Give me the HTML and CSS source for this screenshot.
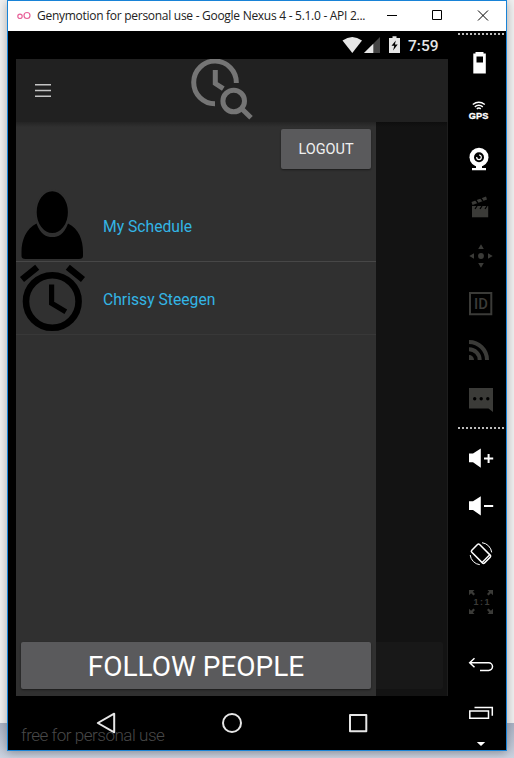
FILE: index.html
```html
<!DOCTYPE html>
<html lang="en">
<head>
<meta charset="utf-8">
<title>Genymotion for personal use</title>
<link rel="stylesheet" href="styles.css">
</head>
<body>
<div class="desktop">
<main class="window">
  <header class="titlebar">
    <svg class="app-logo" width="14" height="10" viewBox="17 10 14 10"><g fill="none" stroke="#e8639a" stroke-width="1.2"><circle cx="20" cy="15.3" r="2.2"/><circle cx="27" cy="14.5" r="3"/></g></svg>
    <span class="title">Genymotion for personal use - Google Nexus 4 - 5.1.0 - API 2...</span>
    <svg class="controls" width="118" height="30" viewBox="378 1 118 30"><g fill="none" stroke="#000" stroke-width="1"><path d="M387 15.5h10M432.500 10.500h9v9h-9zM478 10.500l10 10M488 10.500l-10 10"/></g></svg>
  </header>
  <div class="body">
    <section class="device">
      <div class="status">
        <svg width="60" height="20" viewBox="342 35 60 20">
          <path fill="#e6e6e6" d="M342.500 40.500Q352.300 33.500 362 40.500L352.300 53z"/>
          <path fill="#444" d="M380 37v16h-16z"/><path fill="#e6e6e6" d="M373.300 43.700V53H364z"/>
          <path fill="#e6e6e6" d="M389 38h3.500v-1.700h4V38h3.500v15h-11z"/><path fill="#000" d="M395.800 40.500l-4.300 5.200h2.800l-1.200 4.800 4.600-6h-2.800z"/>
        </svg>
        <span class="time">7:59</span>
      </div>
      <div class="appbar">
        <svg class="menu" width="16" height="14" viewBox="35 83 16 14"><path stroke="#c4c4c4" stroke-width="1.500" d="M35 84.700h16M35 90.500h16M35 96.200h16"/></svg>
        <svg class="logo" width="64" height="63" viewBox="190 59 64 63"><g fill="none" stroke="#757575" stroke-width="5"><path d="M236.300 83A21.300 21.300 0 1 0 215 103.700"/><path d="M215.300 70v13.500l8 5.200"/><circle cx="233.700" cy="101" r="10.800"/><path d="M241.500 108.500l9.500 9.300"/></g></svg>
      </div>
      <div class="content">
        <div class="drawer">
          <button class="logout">LOGOUT</button>
          <ul class="people">
            <li><svg width="68" height="72" viewBox="18 189 68 72"><path d="M36.500 223.500C41 235 46 237 52.300 237S63.500 235 68 223.500C79 229 83 240 83 252v4q0 3-4 3H25.500q-4 0-4-3v-4C21.500 240 26 229 36.500 223.500z"/><ellipse cx="52.300" cy="212.200" rx="16.500" ry="21.800" stroke="#303030" stroke-width="1.800"/></svg><span>My Schedule</span></li>
            <li><svg width="68" height="72" viewBox="18 262 68 72"><g fill="none" stroke="#000"><circle cx="52.300" cy="301.500" r="26.300" stroke-width="6.600"/><path stroke-width="6.500" d="M22 279.500l15.200-12.200M67.800 267.300L83 279.500"/><path stroke-width="5.200" d="M51.600 284.500v18.700l14.200 8.600"/></g></svg><span>Chrissy Steegen</span></li>
          </ul>
          <button class="follow">FOLLOW PEOPLE</button>
        </div>
        <div class="scrim"><div class="ghost"></div></div>
      </div>
      <nav class="navbar">
        <svg width="432" height="54" viewBox="16 696 432 54"><g fill="none" stroke="#e6e6e6" stroke-width="2" stroke-linejoin="round"><path d="M97.800 723l16.400-9.300v18.600z"/><circle cx="232" cy="723" r="9"/><path d="M350 714.900h16.300v16.300H350z"/></g></svg>
        <span class="watermark">free for personal use</span>
      </nav>
    </section>
    <aside class="tools">
      <div class="dots"></div>
      <div class="group">
        <svg viewBox="458 38 48 48"><path fill="#fff" fill-rule="evenodd" d="M475.500 52h8v1.500h2.300v20h-12.500v-20h2.200zM476.500 56.500v6h6.500v-6z"/></svg>
        <svg viewBox="458 86 48 48"><g fill="none" stroke="#fff" stroke-width="1.500"><path d="M472.800 104.500q6-4.500 12 0M474.800 106.800q4-3 8 0M476.800 108.800q2-1.500 4 0"/></g><text x="468.800" y="118.500" textLength="19.500" lengthAdjust="spacingAndGlyphs" class="gps">GPS</text></svg>
        <svg viewBox="458 134 48 48"><circle cx="479" cy="157.300" r="9.500" fill="#fff"/><path fill="#fff" d="M476 165h6v3h4v2.200h-14V168h4z"/><circle cx="479" cy="157.300" r="5"/><circle cx="479" cy="157.300" r="2.300" fill="none" stroke="#fff" stroke-width="1.200"/><path d="M476 154h3v3h-3z"/></svg>
        <svg viewBox="458 182 48 48"><g fill="#3b3b38"><path d="M472 206h16.200v11.300H472z"/><path d="M471.500 202l14.500-5.500 1 3-14.500 5.500z"/></g><path stroke="#000" stroke-width="1.300" d="M475 199l3 4M480 197l3 4M475 209l2-3M480 209l2-3M485 209l2-3"/></svg>
        <svg viewBox="458 230 48 48"><g fill="#3b3b38"><circle cx="481" cy="256" r="2.900"/><path d="M481 244.300l2.800 4.700h-5.600zM481 267.700l2.800-4.700h-5.600zM469.300 256l4.700-2.800v5.600zM492.700 256l-4.700-2.800v5.600z"/></g></svg>
        <svg viewBox="458 278 48 48"><path fill="none" stroke="#3b3b38" stroke-width="2" d="M470 293h21.300v21.300H470z"/><text x="474" y="309" textLength="13.800" lengthAdjust="spacingAndGlyphs" class="id">ID</text></svg>
        <svg viewBox="458 326 48 48"><g fill="none" stroke="#3b3b38" stroke-width="4"><path d="M469 342a18 18 0 0 1 18 18M469 349.300a10.700 10.700 0 0 1 10.700 10.700"/></g><path fill="#3b3b38" d="M469 355a5 5 0 0 1 5 5h-5z"/></svg>
        <svg viewBox="458 374 48 48"><path fill="#3b3b38" d="M469 388h24v24l-4.500-3.500H469z"/><g fill="#000"><circle cx="474.700" cy="398.700" r="1.700"/><circle cx="481.200" cy="398.700" r="1.700"/><circle cx="487.800" cy="398.700" r="1.700"/></g></svg>
      </div>
      <div class="dots"></div>
      <div class="group">
        <svg viewBox="458 434 48 48"><path fill="#fff" d="M469 453.500h4l7.800-5v19.200l-7.800-5.500h-4z"/><path stroke="#fff" stroke-width="2" d="M484 458.500h9.200M488.600 454v9"/></svg>
        <svg viewBox="458 482 48 48"><path fill="#fff" d="M469 501.200h4l7.800-5v19.200l-7.800-5.500h-4z"/><path stroke="#fff" stroke-width="2" d="M484 506h9.200"/></svg>
        <svg viewBox="458 530 48 48"><g fill="none" stroke="#fff"><rect x="472" y="548.200" width="18" height="11" rx="1.500" stroke-width="1.500" transform="rotate(45 481 553.700)"/><path stroke-width="1.400" d="M482.300 562.200l7.200-7.200"/><path stroke-width="1" d="M482 542.700a11 11 0 0 1 9.700 9.700M470.200 555a11 11 0 0 0 9.600 9.700"/></g></svg>
        <svg viewBox="458 578 48 48"><g fill="#3b3b38"><path d="M469 590h5.500l-1.700 1.700 2.200 2.200-1.500 1.500-2.400-2.200-2.100 2.100zM493 590h-5.500l1.700 1.700-2.200 2.200 1.500 1.500 2.400-2.200 2.100 2.100zM469 614h5.500l-1.700-1.700 2.200-2.200-1.500-1.500-2.400 2.200-2.100-2.100zM493 614h-5.500l1.700-1.700-2.200-2.200 1.500-1.500 2.400 2.200 2.100-2.100z"/></g><text x="473.500" y="605.300" textLength="16" class="ratio">1:1</text></svg>
      </div>
      <div class="group keys">
        <svg viewBox="458 640 48 48"><path fill="none" stroke="#fff" stroke-width="1.500" d="M474.500 658.300l-4.800 4.500 4.800 4.500M469.700 662.800h19a3.800 3.800 0 0 1 0 7.600H480"/></svg>
        <svg viewBox="458 688 48 48"><path fill="none" stroke="#fff" stroke-width="1.500" d="M469.800 711h18.700v7.200h-18.700zM474.500 707.500h17.800v8.200"/></svg>
        <svg class="caret" viewBox="458 736 48 14"><path fill="#fff" d="M476.800 742h8.400l-4.200 4z"/></svg>
      </div>
    </aside>
  </div>
</main>
</div>
</body>
</html>
```
FILE: styles.css
```css
* { box-sizing: border-box; }
body { margin: 0; font-family: Roboto, sans-serif; }
svg { display: block; flex: none; }
.desktop {
  width: 514px; height: 758px; padding-left: 7px; overflow: hidden;
  background: linear-gradient(#a9b2c4, #ccd3e0) 0 723px / 100% 35px no-repeat, #f0f0f0;
}
.window {
  width: 500px; height: 751px; border: 1px solid #1883d7;
  background: #000; box-shadow: 0 2px 9px rgba(0, 0, 0, .3);
}
.titlebar { display: flex; align-items: center; height: 30px; padding-left: 9px; background: #fff; }
.title {
  width: 341px; margin-left: 6px; font: 12px/30px "Open Sans", sans-serif;
  letter-spacing: -.28px; white-space: nowrap; color: #222;
}
.controls { margin-left: auto; margin-right: 10px; }
.body { display: flex; height: 719px; }
.device { width: 440px; padding-left: 8px; }
.status { display: flex; align-items: center; justify-content: flex-end; height: 28px; padding-right: 9px; }
.time { margin-left: 6px; padding-top: 2px; font-size: 15.500px; font-weight: 500; line-height: 28px; color: #e6e6e6; width: 31px; }
.appbar { display: flex; align-items: center; height: 63px; padding-left: 19px; background: #212121; }
.menu { margin-bottom: 1px; }
.logo { margin-left: 139px; }
.content { display: flex; height: 574px; }
.drawer {
  display: flex; flex-direction: column; width: 360px; padding: 7px 5px;
  background: linear-gradient(#242424, #303030 5px);
}
button { border: 0; border-radius: 2px; padding: 0; font-family: Roboto, sans-serif; color: #fff; background: #5a5a5c; box-shadow: 0 1px 2px rgba(0, 0, 0, .45); }
.logout { align-self: flex-end; width: 90px; height: 40px; padding-top: 2px; font-size: 14.500px; line-height: 38px; color: #f0f0f0; }
.people { list-style: none; margin: 20px -5px 0; padding: 0; }
.people li { display: flex; align-items: center; height: 73px; padding-left: 2px; border-bottom: 1px solid #474747; font-size: 15.700px; color: #33b5e5; }
.people li:last-child { border-color: #383838; }
.people span { margin-left: 17px; padding-top: 2px; }
.follow { height: 47px; margin-top: auto; padding-top: 2px; font-size: 28px; line-height: 45px; }
.scrim { display: flex; align-items: flex-end; width: 72px; padding-bottom: 7px; background: linear-gradient(#0e0e0e, #131313 5px); border-right: 1px solid #1d1d1d; }
.ghost { width: 67px; height: 47px; border-radius: 0 2px 2px 0; background: #181818; }
.navbar { position: relative; height: 54px; }
.watermark { position: absolute; left: 5px; top: 29px; font-size: 17px; font-weight: 300; line-height: 20px; letter-spacing: -.47px; white-space: nowrap; color: #484848; }
.tools { width: 58px; padding: 2px 0 0 10px; }
.dots { width: 46px; height: 2px; background: repeating-linear-gradient(90deg, #bbb 0 2px, transparent 2px 4px); }
.group { display: flex; flex-direction: column; width: 48px; padding: 3px 0 5px; }
.dots + .group svg, .keys svg { width: 48px; height: 48px; }
.dots ~ .dots + .group { padding-top: 5px; }
.keys { padding: 9px 0 0; }
.keys .caret { height: 14px; }
.gps { font: bold 9px "Liberation Sans", sans-serif; fill: #fff; stroke: #fff; stroke-width: .3px; }
.id { font: 500 14px Roboto, sans-serif; fill: #3b3b38; }
.ratio { font: bold 9px "Liberation Sans", sans-serif; fill: #3b3b38; }
```
